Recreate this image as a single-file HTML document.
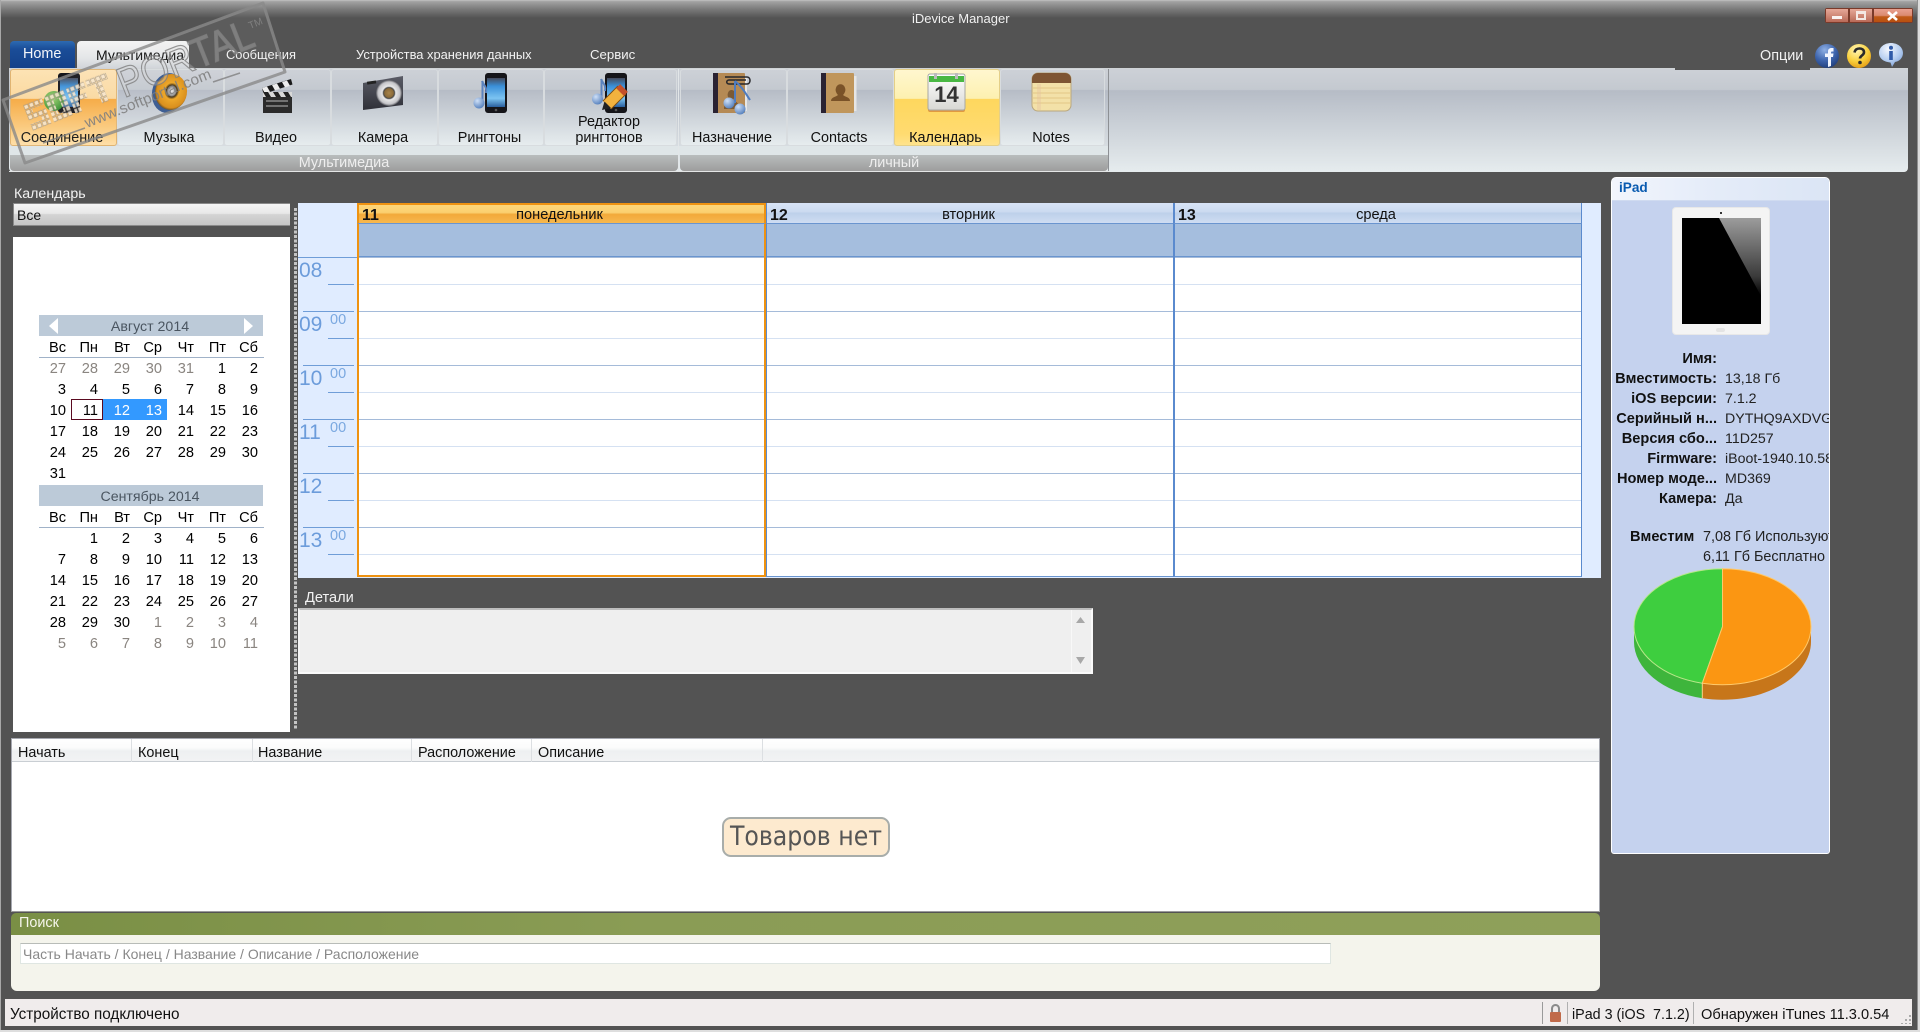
<!DOCTYPE html>
<html lang="ru"><head><meta charset="utf-8"><title>iDevice Manager</title>
<style>
html,body{margin:0;padding:0;width:1920px;height:1032px;overflow:hidden;background:#535353}
body{position:relative;font-family:"Liberation Sans",Arial,sans-serif;font-size:14px;color:#111}
.a,.t{position:absolute}
.t{white-space:nowrap;line-height:20px;height:20px}
svg{position:absolute;overflow:visible}
.w{color:#f2f2f2}
.rb{position:absolute;top:69px;height:77px;box-sizing:border-box;border:1px solid #d8dcdf;border-radius:3px;background:linear-gradient(#cdd1d7 0,#c4c9d0 26%,#b6bcc6 27%,#e6ecee 100%)}
.rt{position:absolute;left:0;right:3px;text-align:center;line-height:16px;color:#111;font-size:14.4px}
.lab{position:absolute;top:155px;height:16px;line-height:16px;text-align:center;color:#eee;background:linear-gradient(#b9bdbd,#9d9d9d);font-size:14.4px;border-radius:0 0 4px 4px}
.cal{position:absolute;left:34px;width:224px;display:grid;grid-template-columns:repeat(7,32px);grid-auto-rows:21px;line-height:21px;text-align:right;font-size:14.6px;color:#000}
.cal b{font-weight:normal;color:#8a8580}
.mh{position:absolute;left:39px;width:224px;height:21px;box-sizing:border-box;padding-right:2px;background:#bccad8;text-align:center;line-height:24px;color:#4a5560;font-size:14.2px}
.hr{position:absolute;height:1px;background:#6f9dd8}
.big{position:absolute;left:299px;font-size:21px;line-height:24px;color:#6c9cdb}
.sm{position:absolute;left:330px;font-size:14.5px;line-height:16px;color:#7aa8e0}
.col{position:absolute;top:224px;height:353px;box-sizing:border-box}
.rows{position:absolute;left:0;right:0;top:33px;bottom:0;background:repeating-linear-gradient(#a5bbd9 0 1px,#fff 1px 27px,#d5e1f2 27px 28px,#fff 28px 54px)}
.band{position:absolute;left:0;right:0;top:0;height:33px;background:#a5bede;border-bottom:1px solid #6a95cf;box-sizing:border-box}
.chead{position:absolute;top:203px;height:21px;box-sizing:border-box;border-bottom:1px solid #6a95cf;padding-right:4px;background:linear-gradient(#d8e4f6 0,#cbdaf0 45%,#bdd0ea 50%,#cfddf2 100%);line-height:25px;text-align:center;font-size:14.6px;color:#111}
.chead.o{background:linear-gradient(#fdd67a 0,#fbd070 42%,#f2a93a 52%,#f7b84e 100%);border-top:2px solid #ee9211;border-left:2px solid #ee9211;border-right:2px solid #ee9211;line-height:21px}
.chead u{position:absolute;left:3px;top:0;text-decoration:none;font-weight:bold;font-size:16px}
.th{position:absolute;top:743px;font-size:14.4px;line-height:20px}
.sep{position:absolute;top:739px;height:23px;width:1px;background:#dcdfe2}
.k{position:absolute;left:1611px;width:106px;text-align:right;font-weight:bold;line-height:20px;height:20px;font-size:14.6px;white-space:nowrap;color:#111}
.v{position:absolute;left:113px;line-height:20px;height:20px;font-size:14.2px;white-space:nowrap;color:#222}
</style></head><body>

<!-- window frame -->
<div class="a" style="left:0;top:0;width:1920px;height:20px;background:linear-gradient(#c4c4c4 0,#a2a2a2 8%,#7b7b7b 45%,#535353 90%)"></div>
<div class="a" style="left:0;top:0;width:1px;height:1032px;background:#a8a8a8"></div>
<div class="a" style="left:1917px;top:0;width:1px;height:1032px;background:#8f8f8f"></div>
<div class="a" style="left:1918px;top:0;width:2px;height:1032px;background:#dcdcdc"></div>
<div class="a" style="left:0;top:1030px;width:1920px;height:2px;background:#dedede"></div>
<div class="t w" style="left:912px;top:9px;font-size:13px">iDevice Manager</div>

<!-- window buttons -->
<div class="a" style="left:1825px;top:8px;width:88px;height:15px;background:#7a3a2a;border-radius:2px"></div>
<div class="a" style="left:1826px;top:9px;width:22px;height:13px;background:linear-gradient(#e6a898,#d08a78 50%,#b86a58)"></div>
<div class="a" style="left:1850px;top:9px;width:22px;height:13px;background:linear-gradient(#e6a898,#d08a78 50%,#b86a58)"></div>
<div class="a" style="left:1874px;top:9px;width:38px;height:13px;background:linear-gradient(#e8a090,#db8a70 50%,#c05a18 60%,#b85010)"></div>
<div class="a" style="left:1832px;top:16px;width:10px;height:3px;background:#fff;opacity:.9"></div>
<div class="a" style="left:1856px;top:11px;box-sizing:border-box;width:10px;height:9px;border:2px solid #f4e8e4;border-top-width:3px"></div>
<svg style="left:1887px;top:11px" width="11" height="10"><path d="M1 1L10 9M10 1L1 9" stroke="#fff" stroke-width="2.6"/></svg>

<!-- tabs -->
<div class="a" style="left:10px;top:41px;width:65px;height:27px;border-radius:4px 4px 0 0;background:linear-gradient(#2d6ab2,#1a4d98 30%,#14418a)"></div>
<div class="t" style="left:23px;top:44px;color:#f4f6fa;font-size:14.4px">Home</div>
<div class="a" style="left:77px;top:41px;width:112px;height:28px;border-radius:4px 4px 0 0;background:linear-gradient(#f4f4f4,#e4e6e8 60%,#cfd3d8)"></div>
<div class="t" style="left:96px;top:45px;font-size:14px">Мультимедиа</div>
<div class="t w" style="left:226px;top:45px;font-size:12.9px">Сообщения</div>
<div class="t w" style="left:356px;top:45px;font-size:12.9px">Устройства хранения данных</div>
<div class="t w" style="left:590px;top:45px;font-size:13.2px">Сервис</div>
<div class="t w" style="left:1760px;top:46px;font-size:14.4px">Опции</div>

<!-- top-right icons -->
<svg style="left:1814px;top:43px" width="26" height="26"><defs><radialGradient id="fb" cx=".4" cy=".25" r=".8"><stop offset="0" stop-color="#8fb0e4"/><stop offset=".55" stop-color="#3f66ae"/><stop offset="1" stop-color="#1f3c78"/></radialGradient></defs><circle cx="13" cy="13" r="12" fill="url(#fb)"/><path d="M14 24V14H11V10.500H14V8.500C14 6 15.500 5 17.500 5H19.500V8.500H18C17 8.500 17 9 17 10V10.500H19.500L19 14H17V23Z" fill="#f2f6ff"/></svg>
<svg style="left:1846px;top:43px" width="26" height="26"><defs><radialGradient id="qm" cx=".4" cy=".25" r=".8"><stop offset="0" stop-color="#fff6b8"/><stop offset=".6" stop-color="#f9cf3a"/><stop offset="1" stop-color="#e29a14"/></radialGradient></defs><circle cx="13" cy="13" r="12" fill="url(#qm)"/><path d="M8.500 9.500C9 6.500 11 5.500 13.500 5.500C16.500 5.500 18 7.200 18 9.300C18 12.500 14 12.500 14 15.500" fill="none" stroke="#2a2a2a" stroke-width="2.600"/><circle cx="14" cy="19.500" r="1.800" fill="#2a2a2a"/></svg>
<svg style="left:1878px;top:42px" width="26" height="26"><defs><radialGradient id="inf" cx=".4" cy=".25" r=".8"><stop offset="0" stop-color="#f6f9ff"/><stop offset=".6" stop-color="#b4cdf0"/><stop offset="1" stop-color="#7ea0d6"/></radialGradient></defs><path d="M13 1C20 1 25 5.500 25 11C25 16 21 19.500 17 20L14 25L12.500 20.500C6 20 1 16.500 1 11C1 5.500 6 1 13 1Z" fill="url(#inf)"/><rect x="11.200" y="9" width="3.600" height="9" fill="#2f5aa8"/><circle cx="13" cy="5.800" r="2" fill="#2f5aa8"/></svg>

<!-- ribbon -->
<div class="a" style="left:9px;top:68px;width:1899px;height:104px;box-sizing:border-box;border-radius:0 0 4px 4px;background:linear-gradient(#cdd1d7 0,#c4c9d0 20%,#b6bcc6 21%,#e6ecee 100%);border-top:1px solid #cfd3d6"></div>
<div class="a" style="left:1675px;top:68px;width:135px;height:2px;background:#535353"></div>
<div class="a" style="left:9px;top:146px;width:1100px;height:9px;background:#dfe6e8"></div>
<div class="lab" style="left:10px;width:668px">Мультимедиа</div>
<div class="lab" style="left:680px;width:428px">личный</div>
<div class="a" style="left:678px;top:69px;width:1px;height:103px;background:#e2e6e8"></div>
<div class="a" style="left:1108px;top:69px;width:1px;height:103px;background:#8d9094"></div>
<div class="a" style="left:9px;top:171px;width:1100px;height:1px;background:#e4e6e6"></div>

<div class="rb" style="left:10px;width:107px;background:linear-gradient(#fde3b4 0,#fbd9a0 38%,#f7a93f 39%,#fbc878 75%,#fedfa8 100%);border-color:#e0b472"><div class="rt" style="top:60px">Соединение</div></div>
<div class="rb" style="left:117px;width:107px"><div class="rt" style="top:60px">Музыка</div></div>
<div class="rb" style="left:224px;width:107px"><div class="rt" style="top:60px">Видео</div></div>
<div class="rb" style="left:331px;width:107px"><div class="rt" style="top:60px">Камера</div></div>
<div class="rb" style="left:438px;width:106px"><div class="rt" style="top:60px">Рингтоны</div></div>
<div class="rb" style="left:544px;width:133px"><div class="rt" style="top:44px">Редактор<br>рингтонов</div></div>
<div class="rb" style="left:680px;width:107px"><div class="rt" style="top:60px">Назначение</div></div>
<div class="rb" style="left:787px;width:107px"><div class="rt" style="top:60px">Contacts</div></div>
<div class="rb" style="left:894px;width:106px;background:linear-gradient(#fff7cf 0,#fdf0b0 38%,#fed75e 39%,#ffdb70 85%,#ffe38c 100%);border-color:#e4cf88"><div class="rt" style="top:60px">Календарь</div></div>
<div class="rb" style="left:1000px;width:105px"><div class="rt" style="top:60px">Notes</div></div>

<!-- ribbon icons -->
<svg width="0" height="0"><defs>
<linearGradient id="scr" x1="0" y1="0" x2="0" y2="1"><stop offset="0" stop-color="#454a5c"/><stop offset=".28" stop-color="#3a8fd8"/><stop offset=".7" stop-color="#7cc4f2"/><stop offset="1" stop-color="#2a5f9e"/></linearGradient>
<radialGradient id="ball" cx=".35" cy=".3" r=".8"><stop offset="0" stop-color="#cfe0f7"/><stop offset="1" stop-color="#4b78b8"/></radialGradient>
<g id="ph"><rect x="0" y="0" width="22" height="40" rx="3" fill="#15151a"/><rect x="2" y="5" width="18" height="29" fill="url(#scr)"/><circle cx="11" cy="37" r="1.300" fill="#555"/></g>
</defs></svg>
<svg style="left:58px;top:73px" width="24" height="40"><use href="#ph"/></svg>
<svg style="left:43px;top:90px" width="22" height="22"><defs><radialGradient id="gl" cx=".4" cy=".35" r=".7"><stop offset="0" stop-color="#a4d872"/><stop offset="1" stop-color="#2f8a2c"/></radialGradient></defs><circle cx="11" cy="11" r="10" fill="url(#gl)"/></svg>

<svg style="left:150px;top:73px" width="38" height="40"><defs><radialGradient id="spk" cx=".52" cy=".47" r=".55"><stop offset="0" stop-color="#f0f0f0"/><stop offset=".24" stop-color="#8a8a8a"/><stop offset=".3" stop-color="#3a2a10"/><stop offset=".42" stop-color="#eda41e"/><stop offset=".85" stop-color="#d98a12"/><stop offset="1" stop-color="#4a3a20"/></radialGradient></defs><ellipse cx="18" cy="20" rx="16" ry="20" fill="#33558e" transform="rotate(10 18 20)"/><ellipse cx="21" cy="19" rx="16" ry="18" fill="url(#spk)" transform="rotate(10 21 19)"/></svg>

<svg style="left:262px;top:74px" width="31" height="40"><path d="M0 14L29 5L30.500 10.500L1.500 20Z" fill="#1a1a1a"/><path d="M0 14L5 12.500L8 17.800L3 19.500ZM10 11L15 9.500L18 14.800L13 16.400ZM20 8L25 6.500L28 11.800L23 13.400Z" fill="#eee"/><rect x="1" y="18" width="29" height="21" fill="#2b2b2b"/><rect x="1" y="18" width="29" height="5" fill="#d8d8d8"/><path d="M1 18h5l3 5h-5zM11 18h5l3 5h-5zM21 18h5l3 5h-5z" fill="#222"/><path d="M4 27h22M4 32h22" stroke="#8a8a8a" stroke-width="1.500"/></svg>

<svg style="left:362px;top:75px" width="42" height="36"><defs><linearGradient id="cam" x1="0" y1="0" x2="0" y2="1"><stop offset="0" stop-color="#5a5c66"/><stop offset="1" stop-color="#2f3038"/></linearGradient><radialGradient id="lens" cx=".5" cy=".5" r=".5"><stop offset="0" stop-color="#a8844a"/><stop offset=".34" stop-color="#8a6a38"/><stop offset=".42" stop-color="#444"/><stop offset=".52" stop-color="#e8e8e8"/><stop offset=".85" stop-color="#c4c4c8"/><stop offset="1" stop-color="#55565c"/></radialGradient></defs><path d="M1 8L41 1V30L1 35Z" fill="url(#cam)"/><rect x="5" y="6" width="9" height="3" fill="#222" transform="rotate(-8 10 7)"/><circle cx="27" cy="18" r="13" fill="url(#lens)"/></svg>

<svg style="left:473px;top:73px" width="36" height="42"><g transform="translate(12,0)"><use href="#ph"/></g><rect x="8.500" y="8" width="2" height="23" fill="#5b83bf"/><path d="M9 8C11 13 14 13 13 20" fill="none" stroke="#5b83bf" stroke-width="2"/><circle cx="6" cy="30" r="5.500" fill="url(#ball)"/></svg>

<svg style="left:591px;top:73px" width="38" height="42"><g transform="translate(14,0)"><use href="#ph"/></g><rect x="9.500" y="6" width="2" height="21" fill="#5b83bf"/><path d="M10 6C12 11 15 11 14 18" fill="none" stroke="#5b83bf" stroke-width="2"/><circle cx="6.500" cy="26" r="5.500" fill="url(#ball)"/><path d="M16 32L31 17" stroke="#7a4a10" stroke-width="12.500"/><path d="M16 32L31 17" stroke="#f2b23e" stroke-width="10.500"/><path d="M29 19L33 15" stroke="#c4502a" stroke-width="11"/><path d="M11 37L13.500 28.500L20 35Z" fill="#222"/></svg>

<svg style="left:713px;top:73px" width="40" height="41"><rect x="0" y="0" width="32" height="40" rx="1" fill="#b58a55"/><rect x="0" y="0" width="5" height="40" fill="#2a2232"/><rect x="32" y="3" width="2" height="35" fill="#e6e6e6"/><path d="M11 36C11 29 15 29 17 27C15 25 14 22 15 20C16 16 21 16 22 20C23 23 21 25 20 27C23 29 26 29 26 36Z" fill="#7c5a34"/><path d="M12 4H34C38 4 38 11 34 11H16C13 11 13 7 16 7H33" fill="none" stroke="#26262a" stroke-width="1.500"/><path d="M22 8V30M22 8C27 12 30 16 37 27" fill="none" stroke="#4f7cc0" stroke-width="2"/><circle cx="16" cy="30" r="5.500" fill="url(#ball)"/><circle cx="27" cy="36" r="5.500" fill="url(#ball)"/></svg>

<svg style="left:821px;top:73px" width="37" height="41"><rect x="0" y="0" width="33" height="40" rx="1" fill="#c0965c"/><rect x="0" y="0" width="5" height="40" fill="#2a2232"/><rect x="33" y="3" width="2.500" height="35" fill="#e6e6e6"/><path d="M10 28C10 24 15 24 17 22C15 20 14 17 15 15C16 10 23 10 24 15C25 17 24 20 22 22C24 24 29 24 29 28Z" fill="#7a5228"/></svg>

<svg style="left:928px;top:73px" width="38" height="40"><defs><linearGradient id="pg" x1="0" y1="0" x2="0" y2="1"><stop offset="0" stop-color="#fff"/><stop offset="1" stop-color="#d8d8d4"/></linearGradient></defs><rect x="0" y="1" width="37" height="38" rx="2" fill="#e09a40"/><rect x="0" y="1" width="37" height="36" rx="2" fill="url(#pg)" stroke="#a8a8a4"/><rect x="1" y="3" width="35" height="6" fill="#49b843"/><rect x="6" y="0" width="3" height="6" fill="#bbb"/><rect x="27" y="0" width="3" height="6" fill="#bbb"/><text x="18.500" y="29" text-anchor="middle" font-family="Liberation Sans" font-weight="bold" font-size="22" fill="#333">14</text></svg>

<svg style="left:1032px;top:73px" width="40" height="40"><rect width="39" height="38" rx="6" fill="#f3e1a8" stroke="#b9a77e"/><path d="M0 10V6C0 2 3 0 6 0H33C36 0 39 2 39 6V10Z" fill="#7e5533"/><path d="M1 15H38M1 20H38M1 25H38M1 30H38" stroke="#e3c886" stroke-width="1"/><path d="M6 11V37M8 11V37" stroke="#e6bfa0" stroke-width=".7"/></svg>

<!-- watermark -->
<svg style="left:0;top:0" width="300" height="175"><defs><pattern id="wp" width="5.500" height="5.500" patternUnits="userSpaceOnUse"><rect x=".5" y=".5" width="4.200" height="4.200" fill="#f8e8d0" stroke="#9a9082" stroke-width=".6"/></pattern></defs>
<polygon points="3,100 263,3 285,72 25,163" fill="rgba(240,240,240,.06)" stroke="#8a8a8a" stroke-opacity=".8" stroke-width="3" stroke-linejoin="round"/>
<g transform="translate(33,131) rotate(-21.500)" opacity=".85">
<path d="M0 -28h20v7h-13v4h13v17h-20v-7h13v-4h-13zM23 -28h20v28h-20zM30 -21v14h6v-14zM46 -28h19v7h-12v4h10v6h-10v11h-7zM67 -28h22v7h-7.500v21h-7v-21h-7.500z" fill="url(#wp)"/>
</g>
<text transform="translate(124,98) rotate(-21.500)" font-family="Liberation Sans" font-size="42" fill="#dcdcdc" fill-opacity=".28" stroke="#7e7e7e" stroke-opacity=".8" stroke-width="1.200" textLength="143" lengthAdjust="spacingAndGlyphs">PORTAL</text>
<text transform="translate(250,29) rotate(-21.500)" font-family="Liberation Sans" font-size="10" fill="#808080">TM</text>
<text transform="translate(87,128) rotate(-21.800)" font-family="Liberation Sans" font-size="15" fill="#808080" fill-opacity=".9" textLength="135" lengthAdjust="spacingAndGlyphs">www.softportal.com</text>
<path d="M43 143L85 128M213 82L240 73" stroke="#808080" stroke-opacity=".8" stroke-width="1.500"/>
</svg>

<!-- left calendar -->
<div class="t w" style="left:14px;top:184px;font-size:14.2px">Календарь</div>
<div class="a" style="left:13px;top:203px;width:277px;height:23px;box-sizing:border-box;border:1px solid #8a8a8a;border-right:0;background:linear-gradient(#f6f6f6,#e8e8e8 45%,#d4d4d4 50%,#c6c6c6)"></div>
<div class="t" style="left:17px;top:205px;font-size:14px">Все</div>
<div class="a" style="left:13px;top:237px;width:277px;height:495px;background:#fff"></div>
<div class="a" style="left:294px;top:208px;width:3px;height:522px;background:repeating-linear-gradient(#c4c4c4 0 3px,#535353 3px 4.500px)"></div>

<div class="mh" style="top:315px">Август 2014</div>
<svg style="left:49px;top:318px" width="10" height="16"><path d="M9 0V16L0 8Z" fill="#fff"/></svg>
<svg style="left:244px;top:318px" width="10" height="16"><path d="M0 0V16L9 8Z" fill="#fff"/></svg>
<div class="a" style="left:39px;top:357px;width:225px;height:1px;background:#a0b2c8"></div>
<div class="a" style="left:71px;top:399px;width:32px;height:21px;box-sizing:border-box;border:1px solid #5a0a20"></div>
<div class="a" style="left:103px;top:399px;width:64px;height:21px;background:#3399ff"></div>
<div class="cal" style="top:338px">
<span>Вс</span><span>Пн</span><span>Вт</span><span>Ср</span><span>Чт</span><span>Пт</span><span>Сб</span>
</div>
<div class="cal" style="top:359px">
<b>27</b><b>28</b><b>29</b><b>30</b><b>31</b><span>1</span><span>2</span>
<span>3</span><span>4</span><span>5</span><span>6</span><span>7</span><span>8</span><span>9</span>
<span>10</span><span>11</span><span style="color:#fff">12</span><span style="color:#fff">13</span><span>14</span><span>15</span><span>16</span>
<span>17</span><span>18</span><span>19</span><span>20</span><span>21</span><span>22</span><span>23</span>
<span>24</span><span>25</span><span>26</span><span>27</span><span>28</span><span>29</span><span>30</span>
<span>31</span>
</div>

<div class="mh" style="top:485px">Сентябрь 2014</div>
<div class="a" style="left:39px;top:527px;width:225px;height:1px;background:#a0b2c8"></div>
<div class="cal" style="top:508px">
<span>Вс</span><span>Пн</span><span>Вт</span><span>Ср</span><span>Чт</span><span>Пт</span><span>Сб</span>
</div>
<div class="cal" style="top:529px">
<span></span><span>1</span><span>2</span><span>3</span><span>4</span><span>5</span><span>6</span>
<span>7</span><span>8</span><span>9</span><span>10</span><span>11</span><span>12</span><span>13</span>
<span>14</span><span>15</span><span>16</span><span>17</span><span>18</span><span>19</span><span>20</span>
<span>21</span><span>22</span><span>23</span><span>24</span><span>25</span><span>26</span><span>27</span>
<span>28</span><span>29</span><span>30</span><b>1</b><b>2</b><b>3</b><b>4</b>
<b>5</b><b>6</b><b>7</b><b>8</b><b>9</b><b>10</b><b>11</b>
</div>

<!-- scheduler -->
<div class="a" style="left:298px;top:203px;width:1303px;height:375px;background:#e0ecff"></div>
<div class="hr" style="left:298px;top:257px;width:60px"></div>
<div class="big" style="top:259px">08</div>
<div class="big" style="top:313px">09</div><div class="sm" style="top:312px">00</div>
<div class="big" style="top:367px">10</div><div class="sm" style="top:366px">00</div>
<div class="big" style="top:421px">11</div><div class="sm" style="top:420px">00</div>
<div class="big" style="top:475px">12</div>
<div class="big" style="top:529px">13</div><div class="sm" style="top:528px">00</div>
<div class="hr" style="left:328px;top:284px;width:26px"></div>
<div class="hr" style="left:303px;top:311px;width:51px"></div>
<div class="hr" style="left:328px;top:338px;width:26px"></div>
<div class="hr" style="left:303px;top:365px;width:51px"></div>
<div class="hr" style="left:328px;top:392px;width:26px"></div>
<div class="hr" style="left:303px;top:419px;width:51px"></div>
<div class="hr" style="left:328px;top:446px;width:26px"></div>
<div class="hr" style="left:303px;top:473px;width:51px"></div>
<div class="hr" style="left:328px;top:500px;width:26px"></div>
<div class="hr" style="left:303px;top:527px;width:51px"></div>
<div class="hr" style="left:328px;top:554px;width:26px"></div>

<div class="col" style="left:766px;width:408px;border-left:1px solid #5a8ace;border-bottom:1px solid #6a95cf;background:#fff"><div class="rows"></div><div class="band"></div></div>
<div class="col" style="left:1173px;width:409px;border-left:2px solid #5a8ace;border-right:1px solid #5a8ace;border-bottom:1px solid #6a95cf;background:#fff"><div class="rows"></div><div class="band"></div></div>
<div class="col" style="left:357px;width:409px;border-left:2px solid #ee9211;border-right:2px solid #ee9211;border-bottom:2px solid #ee9211;background:#fff"><div class="rows"></div><div class="band"></div></div>

<div class="chead o" style="left:357px;width:409px"><u>11</u>понедельник</div>
<div class="chead" style="left:766px;width:408px;border-left:1px solid #5a8ace"><u>12</u>вторник</div>
<div class="chead" style="left:1173px;width:409px;border-left:2px solid #5a8ace;border-right:1px solid #5a8ace"><u>13</u>среда</div>

<!-- details -->
<div class="t w" style="left:305px;top:588px;font-size:14.6px">Детали</div>
<div class="a" style="left:298px;top:608px;width:795px;height:66px;box-sizing:border-box;background:#efefef;border:2px solid #fafafa;border-top-color:#bdbdbd;border-left-color:#f4f4f4"></div>
<div class="a" style="left:1071px;top:610px;width:1px;height:62px;background:#f8f8f8"></div>
<svg style="left:1076px;top:616px" width="9" height="50"><path d="M0 7L4.500 1L9 7ZM0 41L9 41L4.500 48Z" fill="#a8a8a8"/></svg>

<!-- table -->
<div class="a" style="left:11px;top:738px;width:1589px;height:174px;background:#fff;box-sizing:border-box;border:1px solid #a6a8b0;border-bottom:1px solid #9a9a9a"></div>
<div class="a" style="left:12px;top:739px;width:1587px;height:23px;box-sizing:border-box;background:linear-gradient(#fff 0,#fbfbfb 40%,#eef0f1 55%,#f2f3f4 100%);border-bottom:1px solid #c9ced3"></div>
<div class="th" style="left:18px">Начать</div>
<div class="sep" style="left:131px"></div>
<div class="th" style="left:138px">Конец</div>
<div class="sep" style="left:252px"></div>
<div class="th" style="left:258px">Название</div>
<div class="sep" style="left:411px"></div>
<div class="th" style="left:418px">Расположение</div>
<div class="sep" style="left:531px"></div>
<div class="th" style="left:538px">Описание</div>
<div class="sep" style="left:762px"></div>
<div class="a" style="left:722px;top:817px;width:168px;height:40px;box-sizing:border-box;background:#fdeacf;border:2px solid #a8adaa;border-radius:9px;text-align:center;line-height:36px;font-family:'DejaVu Sans Condensed','DejaVu Sans',sans-serif;font-size:26.3px;color:#555;white-space:nowrap">Товаров нет</div>

<!-- search -->
<div class="a" style="left:11px;top:913px;width:1589px;height:22px;border-radius:5px 5px 0 0;background:linear-gradient(90deg,#7a8f45,#8a9c55 40%,#8fa05a 100%)"></div>
<div class="t" style="left:19px;top:913px;color:#f6f6ec;font-size:14.4px">Поиск</div>
<div class="a" style="left:11px;top:935px;width:1589px;height:56px;background:#f4f4ec;border-radius:0 0 6px 6px"></div>
<div class="a" style="left:20px;top:943px;width:1311px;height:21px;box-sizing:border-box;background:#fff;border:1px solid #dfe6e2;border-top-color:#b8bcb8"></div>
<div class="t" style="left:23px;top:944px;color:#888;font-size:14px">Часть Начать / Конец / Название / Описание / Расположение</div>

<!-- status -->
<div class="a" style="left:5px;top:999px;width:1907px;height:27px;background:#f0ecec"></div>
<div class="t" style="left:10px;top:1005px;font-size:15.25px">Устройство подключено</div>
<div class="a" style="left:1542px;top:1002px;width:1px;height:22px;background:#9a9a9a"></div>
<div class="a" style="left:1567px;top:1002px;width:1px;height:22px;background:#b0b0b0"></div>
<div class="a" style="left:1693px;top:1002px;width:1px;height:22px;background:#b0b0b0"></div>
<svg style="left:1549px;top:1004px" width="13" height="19"><path d="M3 9V5C3 2 5 1 6.500 1S10 2 10 5V9" fill="none" stroke="#8a8a8a" stroke-width="2"/><rect x="1" y="8" width="11" height="10" rx="1" fill="#c06a4a"/></svg>
<div class="t" style="left:1572px;top:1005px;font-size:14.3px">iPad 3 (iOS&nbsp; 7.1.2)</div>
<div class="t" style="left:1701px;top:1005px;font-size:14.6px">Обнаружен iTunes 11.3.0.54</div>
<svg style="left:1901px;top:1014px" width="10" height="10"><path d="M8 1h2v2h-2zM4 5h2v2h-2zM8 5h2v2h-2zM0 9h2v1h-2zM4 9h2v1h-2zM8 9h2v1h-2z" fill="#aaa"/></svg>

<!-- iPad panel -->
<div class="a" style="left:1611px;top:177px;width:219px;height:677px;box-sizing:border-box;border:1px solid #fff;border-radius:5px 5px 3px 3px;background:#c5d2ee;overflow:hidden">
  <div class="a" style="left:0;top:0;right:0;height:22px;background:linear-gradient(90deg,#f2f5fc,#e6edf9 40%,#dbe5f5 100%);border-bottom:1px solid #d0dbf0"></div>
  <div class="t" style="left:7px;top:0;color:#0a5bb0;font-size:13.6px;font-weight:bold">iPad</div>
  <div class="a" style="left:60px;top:29px;width:98px;height:128px;box-sizing:border-box;background:#f4f4f4;border:1px solid #e8e8e8;border-radius:4px"></div>
  <div class="a" style="left:70px;top:40px;width:79px;height:106px;background:#000"></div>
  <svg style="left:70px;top:40px" width="79" height="106"><defs><linearGradient id="shine" x1="0" y1="0" x2="0" y2="1"><stop offset="0" stop-color="#9c9c9c"/><stop offset=".75" stop-color="#3a3a3a"/><stop offset="1" stop-color="#000"/></linearGradient></defs><polygon points="37,0 79,0 79,78" fill="url(#shine)"/></svg>
  <div class="a" style="left:108px;top:34px;width:2px;height:2px;background:#333"></div>
  <div class="a" style="left:104px;top:150px;width:9px;height:4px;border-radius:2px;background:#e4e4e4"></div>
  <div class="v" style="top:191px">13,18 Гб</div>
  <div class="v" style="top:211px">7.1.2</div>
  <div class="v" style="top:231px">DYTHQ9AXDVG</div>
  <div class="v" style="top:251px">11D257</div>
  <div class="v" style="top:271px">iBoot-1940.10.58</div>
  <div class="v" style="top:291px">MD369</div>
  <div class="v" style="top:311px">Да</div>
  <div class="v" style="top:349px;left:91px;font-size:14.4px">7,08 Гб Используют</div>
  <div class="v" style="top:369px;left:91px;font-size:14.4px">6,11 Гб Бесплатно</div>
  <svg style="left:-1px;top:382px" width="218" height="145">
    <path d="M23 66.700A88.500 58 0 0 0 91.300 123.200L91.300 138.200A88.500 58 0 0 1 23 81.700Z" fill="#3eb53c"/>
    <path d="M91.300 123.200A88.500 58 0 0 0 200 66.700L200 81.700A88.500 58 0 0 1 91.300 138.200Z" fill="#c7761a"/>
    <path d="M111.500 66.700L111.500 8.700A88.500 58 0 0 0 23 66.700A88.500 58 0 0 0 91.300 123.200Z" fill="#3ece3f" stroke="#b8e88a" stroke-width="1"/>
    <path d="M111.500 66.700L111.500 8.700A88.500 58 0 0 1 200 66.700A88.500 58 0 0 1 91.300 123.200Z" fill="#fb9612" stroke="#ffc96a" stroke-width="1"/>
    <path d="M91.300 123.200V138.200" stroke="#f6d68a" stroke-width="1"/>
  </svg>
</div>
<div class="k" style="top:349px">Имя:</div>
<div class="k" style="top:369px">Вместимость:</div>
<div class="k" style="top:389px">iOS версии:</div>
<div class="k" style="top:409px">Серийный н...</div>
<div class="k" style="top:429px">Версия сбо...</div>
<div class="k" style="top:449px">Firmware:</div>
<div class="k" style="top:469px">Номер моде...</div>
<div class="k" style="top:489px">Камера:</div>
<div class="t" style="left:1630px;top:527px;font-weight:bold;font-size:14.6px">Вместим</div>

</body></html>
